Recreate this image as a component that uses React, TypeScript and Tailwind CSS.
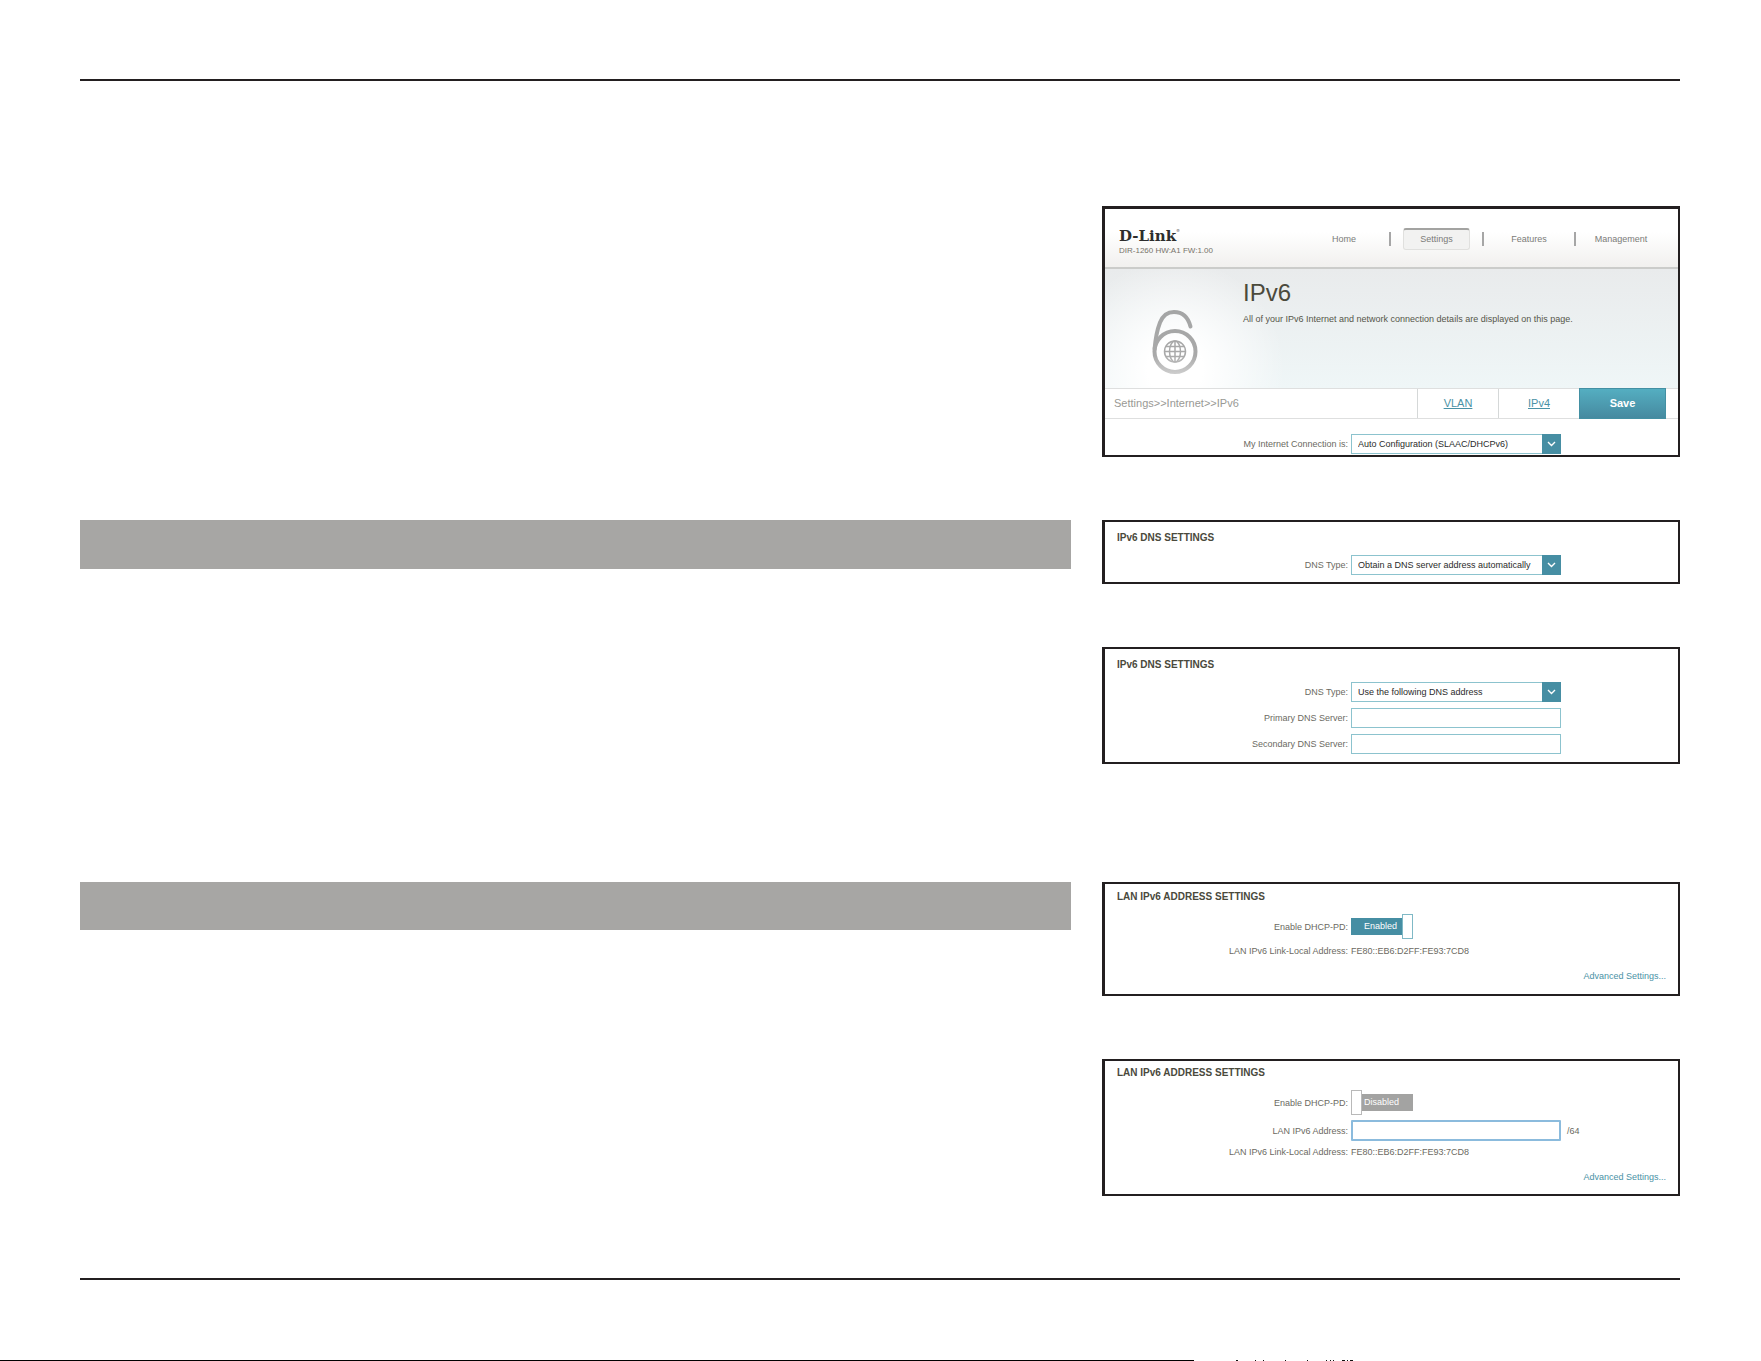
// src/App.tsx
import { useState } from "react";
import type { ReactNode } from "react";

interface PanelProps {
  children: ReactNode;
  className?: string;
}

// Black framed screenshot box used across the right column
function Panel({ children, className = "" }: PanelProps) {
  return (
    <section
      className={`border-2 border-l-[3px] border-[#231f20] bg-white text-[9px] leading-3 text-[#6b6a62] ${className}`}
    >
      {children}
    </section>
  );
}

function PanelTitle({ children }: { children: ReactNode }) {
  return <h2 className="mb-[11px] pl-3 text-[10px] leading-3 font-bold text-[#4a493c]">{children}</h2>;
}

interface RowProps {
  id?: string;
  label: string;
  children: ReactNode;
}

function Row({ id, label, children }: RowProps) {
  return (
    <div className="flex items-center gap-[3px]">
      {id ? (
        <label htmlFor={id} className="w-[243px] text-right">
          {label}
        </label>
      ) : (
        <span className="w-[243px] text-right">{label}</span>
      )}
      {children}
    </div>
  );
}

function SelectBox({ id, value }: { id: string; value: string }) {
  return (
    <div className="relative w-[210px]">
      <select
        id={id}
        defaultValue={value}
        className="block h-5 w-full appearance-none border border-[#8cc3ce] bg-white pr-5 pl-1.5 text-[9px] leading-3 text-[#2b2b2b]"
      >
        <option>{value}</option>
      </select>
      <span className="pointer-events-none absolute inset-y-0 right-0 flex w-[19px] items-center justify-center bg-[#468ea3]">
        <svg width="9" height="6" viewBox="0 0 9 6" fill="none" stroke="#fff" strokeWidth="1.4">
          <path d="M1 1l3.5 3.5L8 1" />
        </svg>
      </span>
    </div>
  );
}

function TextBox({ id }: { id: string }) {
  return <input id={id} type="text" className="h-5 w-[210px] border border-[#8cc3ce] bg-white px-1.5 text-[9px]" />;
}

function Toggle({ id, initial }: { id: string; initial: boolean }) {
  const [on, setOn] = useState(initial);

  return (
    <button
      id={id}
      type="button"
      role="switch"
      aria-checked={on}
      onClick={() => setOn(!on)}
      className={`flex h-[25px] w-[62px] items-center text-white ${on ? "" : "flex-row-reverse"}`}
    >
      <span className={`h-[17px] flex-1 leading-[17px] ${on ? "bg-[#468ea3] pl-2" : "bg-[#a3a3a2] pr-3"}`}>
        {on ? "Enabled" : "Disabled"}
      </span>
      <span className={`h-full w-[11px] border bg-white ${on ? "border-[#7fb9c6]" : "border-[#b9b9b9]"}`} />
    </button>
  );
}

function AdvancedLink() {
  return (
    <div className="mt-[13px] pr-3 text-right">
      <a href="#advanced" className="block text-[#4a92a6]">
        Advanced Settings...
      </a>
    </div>
  );
}

function PadlockIcon() {
  return (
    <svg width="46" height="66" viewBox="0 0 46 66" fill="none">
      <defs>
        <linearGradient id="lock" x1="0" y1="0" x2="0" y2="66" gradientUnits="userSpaceOnUse">
          <stop offset="0" stopColor="#a4a5a5" />
          <stop offset="0.7" stopColor="#a9a9a9" />
          <stop offset="1" stopColor="#cfcfcf" />
        </linearGradient>
      </defs>
      <g stroke="url(#lock)">
        <circle cx="23" cy="42.5" r="20.5" strokeWidth="4" />
        <path d="M2.6 40C3.500 29 5.500 20 8 13.500 11 6 15 3 22 3 31 3 36 8 38.500 17.500" strokeWidth="4" strokeLinecap="round" />
        <g strokeWidth="1.500">
          <circle cx="23" cy="42.500" r="10.500" />
          <ellipse cx="23" cy="42.500" rx="5.500" ry="10.500" />
          <path d="M23 32v21M12.500 42.500h21M14 37.500h18M14 47.500h18" />
        </g>
      </g>
    </svg>
  );
}

const NAV = ["Home", "Settings", "Features", "Management"];

function RouterHeader() {
  return (
    <header className="flex h-[60px] items-start justify-between border-b-2 border-[#cbccca] bg-linear-to-b from-white from-40% to-[#f1f0ee] pr-3 pl-[14px]">
      <div className="pt-[19px]">
        <div className="flex items-start font-['DejaVu_Serif',serif] text-[15px] leading-4 font-bold text-[#2d2d2d]">
          D-Link
          <sup className="top-0 text-[4px] leading-[6px] font-normal">®</sup>
        </div>
        <p className="mt-0.5 text-[8px] leading-[10px] text-[#77736a]">DIR-1260 HW:A1 FW:1.00</p>
      </div>
      <nav className="flex items-center pt-[19px] text-[#7b7b78]">
        {NAV.map((item, i) => (
          <div key={item} className="flex items-center">
            {i > 0 && <span className="h-3.5 w-0.5 bg-[#a6a6a6]" />}
            <a
              href={`#${item.toLowerCase()}`}
              className={
                item === "Settings"
                  ? "mx-3 block h-[22px] w-[67px] rounded-[3px] border border-t-2 border-[#e0e0de] border-t-[#a3a3a1] bg-[#f2f2f1] text-center leading-[19px]"
                  : "block w-[90px] text-center"
              }
            >
              {item}
            </a>
          </div>
        ))}
      </nav>
    </header>
  );
}

function OverviewPanel() {
  return (
    <Panel className="border-t-[3px] pb-px">
      <RouterHeader />
      <div className="flex h-[119px] items-start bg-[radial-gradient(ellipse_110px_110px_at_70px_100px,#ffffff_25%,transparent),linear-gradient(to_bottom,#e9ebec,#eff6f7)]">
        <div className="w-[138px] shrink-0 pt-10 pl-[47px]">
          <PadlockIcon />
        </div>
        <div className="pt-2.5">
          <h1 className="text-[24px] leading-7 text-[#4b4a3c]">IPv6</h1>
          <p className="mt-1 text-[9px] leading-4 text-[#56564a]">
            All of your IPv6 Internet and network connection details are displayed on this page.
          </p>
        </div>
      </div>
      <div className="mb-[15px] flex h-[31px] items-stretch border-y border-[#dedfdf] pr-3 pl-[9px] text-[11px] leading-[29px]">
        <p className="flex-1 text-[#999995]">Settings&gt;&gt;Internet&gt;&gt;IPv6</p>
        <a href="#vlan" className="w-[81px] border-l border-[#d5d8d8] text-center text-[#4a92a6] underline">
          VLAN
        </a>
        <a href="#ipv4" className="w-[81px] border-l border-[#d5d8d8] text-center text-[#4a92a6] underline">
          IPv4
        </a>
        <button
          type="button"
          className="-my-px w-[87px] border border-[#4390a3] bg-linear-to-b from-[#54aec1] to-[#468aa0] font-bold text-white"
        >
          Save
        </button>
      </div>
      <Row id="connection" label="My Internet Connection is:">
        <SelectBox id="connection" value="Auto Configuration (SLAAC/DHCPv6)" />
      </Row>
    </Panel>
  );
}

const LINK_LOCAL = "FE80::EB6:D2FF:FE93:7CD8";

export default function App() {
  return (
    <main className="bg-white pt-[79px] font-['Liberation_Sans',Arial,sans-serif]">
      <div className="mr-[81px] ml-20">
        <hr className="border-0 border-t-2 border-[#231f20]" />

        <div className="mt-[125px] mb-[82px] grid grid-cols-[991fr_578fr] gap-x-[31px]">
          <div className="col-start-2 mb-[63px]">
            <OverviewPanel />
          </div>

          {/* DNS section */}
          <div className="col-start-1 h-[49px] bg-[#a7a6a4]" />
          <div className="mb-[118px] flex flex-col gap-[63px]">
            <Panel className="pt-2.5 pb-[7px]">
              <PanelTitle>IPv6 DNS SETTINGS</PanelTitle>
              <Row id="dns-auto" label="DNS Type:">
                <SelectBox id="dns-auto" value="Obtain a DNS server address automatically" />
              </Row>
            </Panel>
            <Panel className="pt-2.5 pb-2">
              <PanelTitle>IPv6 DNS SETTINGS</PanelTitle>
              <div className="flex flex-col gap-1.5">
                <Row id="dns-manual" label="DNS Type:">
                  <SelectBox id="dns-manual" value="Use the following DNS address" />
                </Row>
                <Row id="dns-primary" label="Primary DNS Server:">
                  <TextBox id="dns-primary" />
                </Row>
                <Row id="dns-secondary" label="Secondary DNS Server:">
                  <TextBox id="dns-secondary" />
                </Row>
              </div>
            </Panel>
          </div>

          {/* LAN section */}
          <div className="col-start-1 h-12 bg-[#a7a6a4]" />
          <div className="flex flex-col gap-[63px]">
            <Panel className="pt-[7px] pb-3">
              <PanelTitle>LAN IPv6 ADDRESS SETTINGS</PanelTitle>
              <div className="flex flex-col gap-1.5">
                <Row id="pd-on" label="Enable DHCP-PD:">
                  <Toggle id="pd-on" initial={true} />
                </Row>
                <Row label="LAN IPv6 Link-Local Address:">
                  <span>{LINK_LOCAL}</span>
                </Row>
              </div>
              <AdvancedLink />
            </Panel>
            <Panel className="pt-1.5 pb-[11px]">
              <PanelTitle>LAN IPv6 ADDRESS SETTINGS</PanelTitle>
              <div className="flex flex-col gap-[5px]">
                <Row id="pd-off" label="Enable DHCP-PD:">
                  <Toggle id="pd-off" initial={false} />
                </Row>
                <Row id="lan-address" label="LAN IPv6 Address:">
                  <input
                    id="lan-address"
                    type="text"
                    className="mr-[3px] h-[21px] w-[210px] rounded-[1px] border-2 border-[#8bbbdd] bg-white px-1.5 text-[9px]"
                  />
                  <span>/64</span>
                </Row>
                <Row label="LAN IPv6 Link-Local Address:">
                  <span>{LINK_LOCAL}</span>
                </Row>
              </div>
              <AdvancedLink />
            </Panel>
          </div>
        </div>

        <hr className="border-0 border-t-2 border-[#231f20]" />
      </div>

      {/* Sliver of the next page at the very bottom */}
      <div className="mt-20 flex h-px">
        <div className="w-[1194px] bg-black" />
        <svg width="160" height="1" viewBox="0 0 160 1" className="ml-[41px]" shapeRendering="crispEdges">
          <path d="M1 .5h2M20 .5h1M28 .5h1M50 .5h1M72 .5h1M91 .5h1M95 .5h1M98 .5h1M107 .5h3M112 .5h1M115 .5h3" stroke="#111" />
        </svg>
      </div>
    </main>
  );
}
